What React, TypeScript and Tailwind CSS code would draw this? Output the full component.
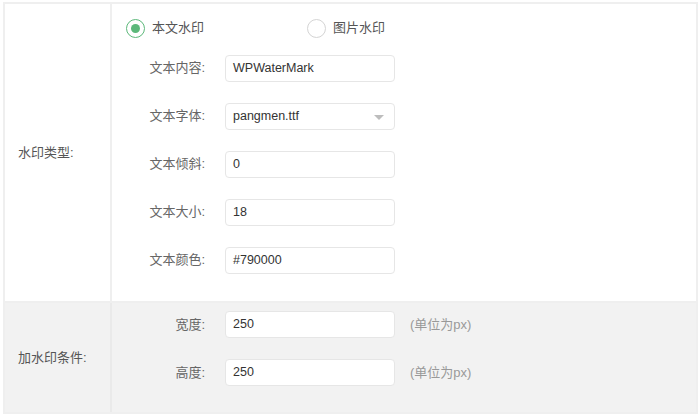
import React from "react";

const cjk = { fontFamily: '"Liberation Sans", "Noto Sans CJK SC", sans-serif' };

function Radio({ checked, label }: { checked?: boolean; label: string }) {
  return (
    <div className="flex items-center">
      <span
        className={
          checked
            ? "flex h-[19px] w-[19px] items-center justify-center rounded-full border-[1.5px] border-[#5cb87a] bg-white"
            : "flex h-[19px] w-[19px] items-center justify-center rounded-full border-[1.5px] border-[#d4d4d4] bg-white"
        }
      >
        {checked && <span className="h-[9px] w-[9px] rounded-full bg-[#5cb87a]" />}
      </span>
      <span className="ml-[7px] text-[13px] text-[#555]">{label}</span>
    </div>
  );
}

function Field({
  label,
  value,
  select,
  suffix,
}: {
  label: string;
  value: string;
  select?: boolean;
  suffix?: string;
}) {
  return (
    <div className="flex h-[27px] items-center">
      <div className="w-[93px] text-right text-[13px] text-[#666]">{label}</div>
      <div className="relative ml-[20px] flex h-[27px] w-[170px] items-center rounded-[4px] border border-[#e6e6e6] bg-white pl-[7px] text-[12.5px] text-[#333]">
        {value}
        {select && (
          <span className="absolute right-[10px] top-[11px] h-0 w-0 border-x-[5px] border-t-[5px] border-x-transparent border-t-[#bdbdbd]" />
        )}
      </div>
      {suffix && <div className="ml-[15px] text-[13px] text-[#999]">{suffix}</div>}
    </div>
  );
}

export default function App() {
  return (
    <div className="h-[415px] w-[700px] bg-white" style={cjk}>
      <div className="ml-[3px] mt-[2px] w-[695px] border-2 border-[#efefef]">
        <div className="flex border-b-2 border-[#efefef] bg-white">
          <div className="flex w-[107px] items-center border-r-2 border-[#efefef] pl-[13px] text-[13px] text-[#555]">
            水印类型:
          </div>
          <div className="flex flex-1 flex-col pt-[14px] pb-[17px]">
            <div className="flex h-[20px] items-center pl-[14px]">
              <Radio checked label="本文水印" />
              <div className="ml-[103px]">
                <Radio label="图片水印" />
              </div>
            </div>
            <div className="mt-[6px] flex flex-col">
              {[
                { l: "文本内容:", v: "WPWaterMark" },
                { l: "文本字体:", v: "pangmen.ttf", s: true },
                { l: "文本倾斜:", v: "0" },
                { l: "文本大小:", v: "18" },
                { l: "文本颜色:", v: "#790000" },
              ].map((f) => (
                <div key={f.l} className="flex h-[48px] items-center">
                  <Field label={f.l} value={f.v} select={f.s} />
                </div>
              ))}
            </div>
          </div>
        </div>
        <div className="flex bg-[#f2f2f2]">
          <div className="flex w-[107px] items-center border-r-2 border-[#eaeaea] pl-[13px] text-[13px] text-[#555]">
            加水印条件:
          </div>
          <div className="flex flex-1 flex-col gap-[21px] pt-[8px] pb-[26px]">
            <Field label="宽度:" value="250" suffix="(单位为px)" />
            <Field label="高度:" value="250" suffix="(单位为px)" />
          </div>
        </div>
      </div>
    </div>
  );
}
